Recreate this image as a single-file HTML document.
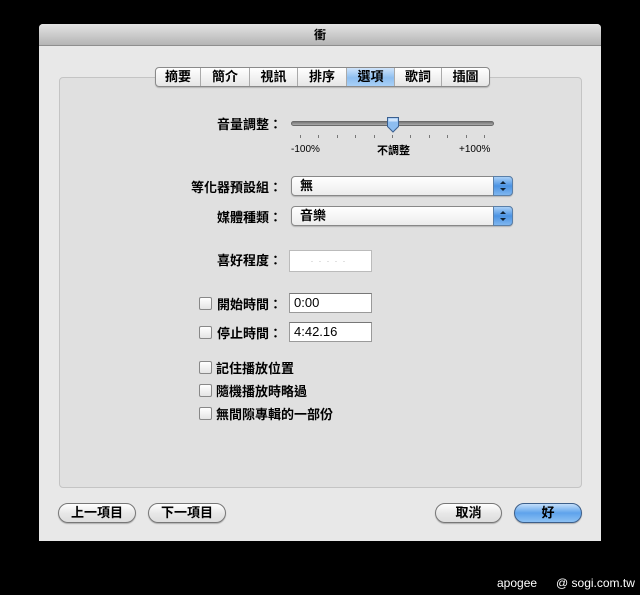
<!DOCTYPE html>
<html><head><meta charset="utf-8"><style>
*{margin:0;padding:0;box-sizing:border-box}
body{width:640px;height:595px;background:#000;position:relative;overflow:hidden;font-family:"Liberation Sans","Noto Sans CJK TC",sans-serif;font-size:12px;color:#000}
.a{position:absolute}
.win{left:39px;top:24px;width:562px;height:517px;background:#e8e8e8;border-radius:4px 4px 0 0}
.title{left:39px;top:24px;width:562px;height:22px;background:linear-gradient(#e4e4e4,#b4b4b4);border-radius:4px 4px 0 0;border-bottom:1px solid #8e8e8e;text-align:center;line-height:22px;font-weight:bold;font-size:12px}
.panel{left:59px;top:77px;width:523px;height:411px;background:#e0e0e0;border:1px solid #c4c4c4;border-radius:4px}
.tabs{left:155px;top:67px;height:20px;display:flex;border:1px solid #8a8a8a;border-radius:4px;background:linear-gradient(#ffffff,#e6e6e6);overflow:hidden;box-shadow:0 1px 1px rgba(0,0,0,.2)}
.tabs div{height:18px;line-height:18px;text-align:center;font-weight:bold;font-size:13px;border-right:1px solid #aaa}
.tabs div:last-child{border-right:none}
.tabs .sel{background:linear-gradient(#cfe4fb,#8ebff0 55%,#a9d0f7)}
.lbl{font-weight:bold;font-size:13px;text-align:right;width:122px}
.pop{left:291px;width:222px;height:20px;border:1px solid #888;border-radius:4px;background:linear-gradient(#fff,#ececec);font-weight:bold;font-size:13px;padding-left:8px;line-height:18px;box-shadow:0 1px 1px rgba(0,0,0,.2)}
.pop i{position:absolute;right:-1px;top:-1px;width:20px;height:20px;border-radius:0 4px 4px 0;background:linear-gradient(#a9d0f7,#4b93e3 50%,#7fb6ef);border:1px solid #5a7fa8}
.pop i:before{content:"";position:absolute;left:6px;top:4px;border:3px solid transparent;border-bottom:3px solid #123;border-top:none}
.pop i:after{content:"";position:absolute;left:6px;top:11px;border:3px solid transparent;border-top:3px solid #123;border-bottom:none}
.fld{left:289px;width:83px;background:#fff;border:1px solid #9a9a9a;border-top-color:#777;font-size:13px;padding-left:4px}
.cb{width:13px;height:13px;border:1px solid #888;border-radius:2px;background:linear-gradient(#fff,#e4e4e4)}
.ck{font-weight:bold;font-size:13px}
.btn{top:503px;height:20px;border:1px solid #777;border-radius:10px;background:linear-gradient(#fff,#e8e8e8 50%,#ddd);text-align:center;line-height:18px;font-weight:bold;font-size:13px;box-shadow:0 1px 1px rgba(0,0,0,.25)}
.tick{top:135px;width:1px;height:3px;background:#777}
</style></head><body>
<div class="a win"></div>
<div class="a title">衝</div>
<div class="a panel"></div>
<div class="a tabs">
<div style="width:45px">摘要</div><div style="width:49px">簡介</div><div style="width:48px">視訊</div><div style="width:49px">排序</div><div class="sel" style="width:48px">選項</div><div style="width:47px">歌詞</div><div style="width:47px">插圖</div>
</div>
<div class="a lbl" style="left:160px;top:114px">音量調整：</div>
<div class="a" style="left:291px;top:121px;width:203px;height:5px;border-radius:3px;background:linear-gradient(#777,#aaa);border:1px solid #6a6a6a"></div>
<svg class="a" style="left:385px;top:116px" width="16" height="18"><path d="M2.5 1.5h11v9l-5.5 5.5-5.5-5.5z" fill="#8dbdf0" stroke="#3a5f8f"/><path d="M3.5 2.5h9v3h-9z" fill="#cfe4fb"/></svg>
<div class="a tick" style="left:300px"></div><div class="a tick" style="left:318px"></div><div class="a tick" style="left:337px"></div><div class="a tick" style="left:355px"></div><div class="a tick" style="left:374px"></div><div class="a tick" style="left:392px"></div><div class="a tick" style="left:410px"></div><div class="a tick" style="left:429px"></div><div class="a tick" style="left:447px"></div><div class="a tick" style="left:466px"></div><div class="a tick" style="left:484px"></div>
<div class="a" style="left:291px;top:144px;font-size:10px">-100%</div>
<div class="a" style="left:377px;top:142px;font-size:11px;font-weight:bold">不調整</div>
<div class="a" style="left:459px;top:144px;font-size:10px">+100%</div>
<div class="a lbl" style="left:160px;top:177px">等化器預設組：</div>
<div class="a pop" style="top:176px">無<i></i></div>
<div class="a lbl" style="left:160px;top:207px">媒體種類：</div>
<div class="a pop" style="top:206px">音樂<i></i></div>
<div class="a lbl" style="left:160px;top:250px">喜好程度：</div>
<div class="a" style="left:289px;top:250px;width:83px;height:22px;background:#fff;border:1px solid #bbb;color:#bbb;font-size:9px;text-align:center;line-height:20px;letter-spacing:5px">·····</div>
<div class="a cb" style="left:199px;top:297px"></div>
<div class="a lbl" style="left:160px;top:294px">開始時間：</div>
<div class="a fld" style="top:293px;height:20px;line-height:18px">0:00</div>
<div class="a cb" style="left:199px;top:326px"></div>
<div class="a lbl" style="left:160px;top:323px">停止時間：</div>
<div class="a fld" style="top:322px;height:20px;line-height:18px">4:42.16</div>
<div class="a cb" style="left:199px;top:361px"></div><div class="a ck" style="left:216px;top:358px">記住播放位置</div>
<div class="a cb" style="left:199px;top:384px"></div><div class="a ck" style="left:216px;top:381px">隨機播放時略過</div>
<div class="a cb" style="left:199px;top:407px"></div><div class="a ck" style="left:216px;top:404px">無間隙專輯的一部份</div>
<div class="a btn" style="left:58px;width:78px">上一項目</div>
<div class="a btn" style="left:148px;width:78px">下一項目</div>
<div class="a btn" style="left:435px;width:67px">取消</div>
<div class="a btn" style="left:514px;width:68px;background:linear-gradient(#c3defa,#5ea3ec 50%,#8cc1f3);border-color:#3d5f8a">好</div>
<div class="a" style="left:497px;top:576px;color:#fff;font-size:12px">apogee</div>
<div class="a" style="left:556px;top:576px;color:#fff;font-size:12px">@ sogi.com.tw</div>
</body></html>
